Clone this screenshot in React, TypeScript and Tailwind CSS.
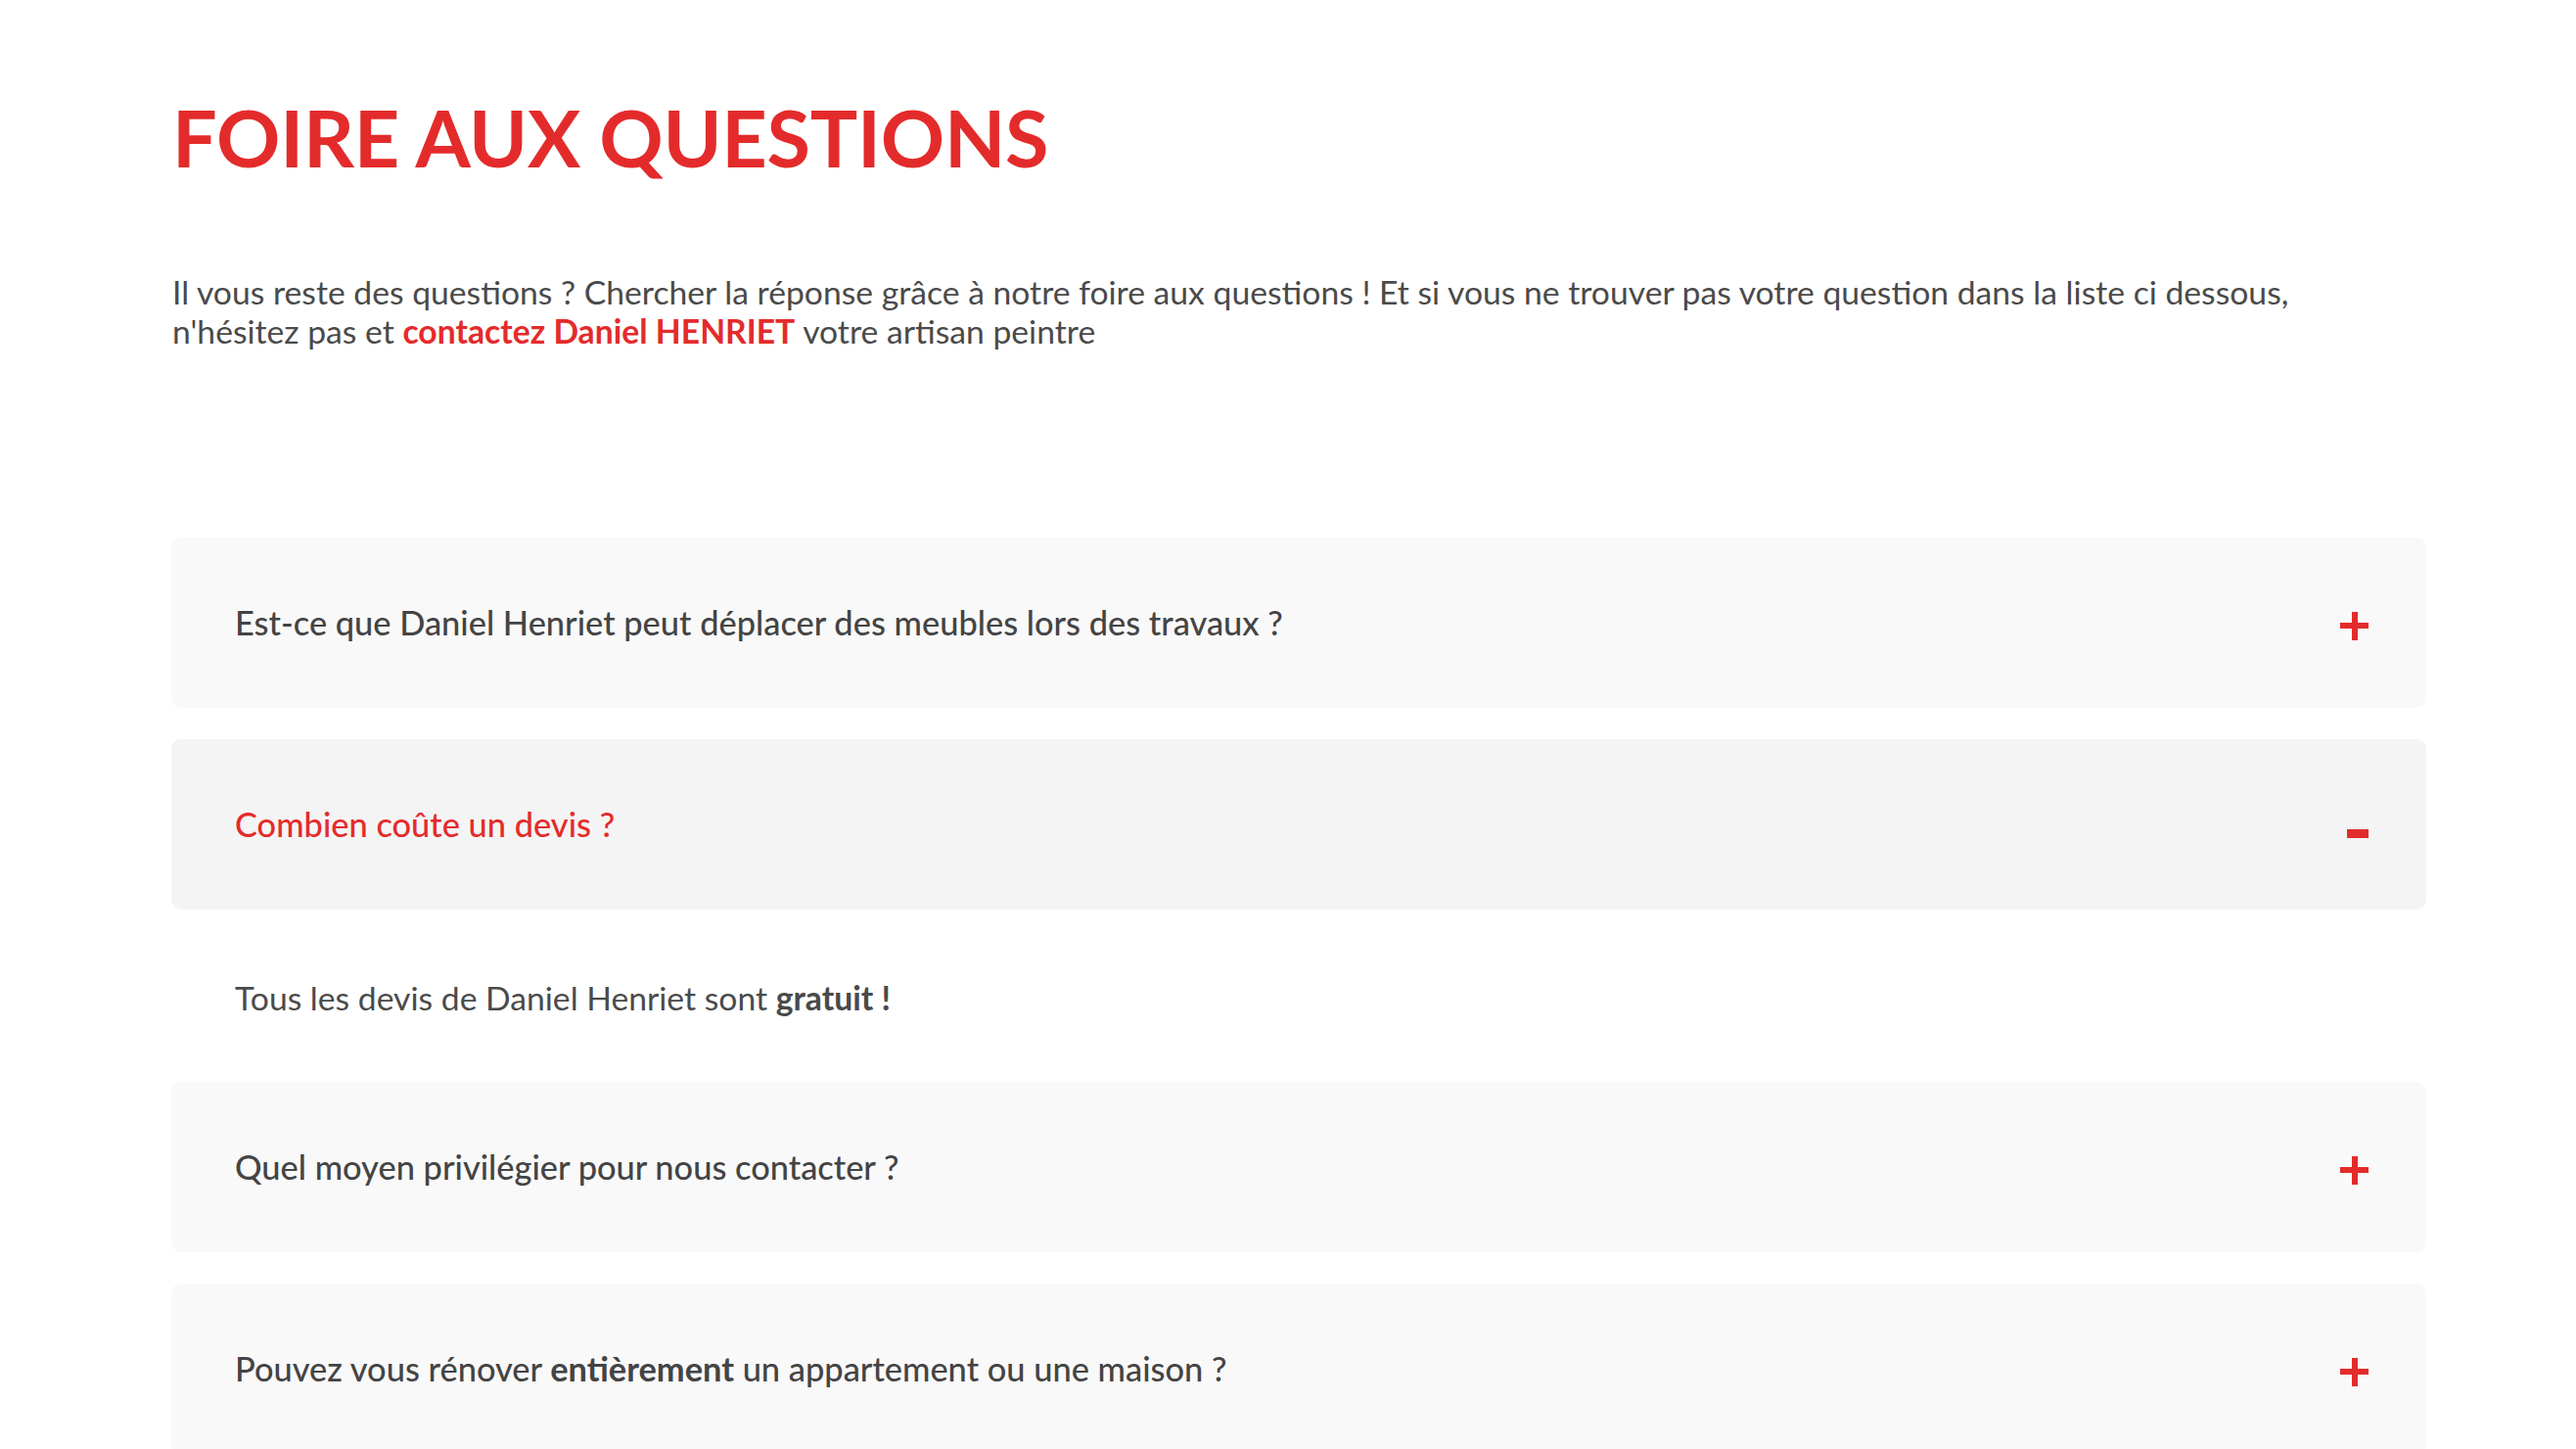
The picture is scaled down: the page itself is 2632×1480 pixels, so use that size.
import React, { useState } from 'react';

type FaqItem = {
    question: React.ReactNode;
    answer: React.ReactNode;
};

const faq: FaqItem[] = [
    {
        question: 'Est-ce que Daniel Henriet peut déplacer des meubles lors des travaux ?',
        answer: 'Oui, nos équipes protègent et déplacent vos meubles avant de commencer.',
    },
    {
        question: 'Combien coûte un devis ?',
        answer: (
            <>
                Tous les devis de Daniel Henriet sont <strong className="font-bold">gratuit !</strong>
            </>
        ),
    },
    {
        question: 'Quel moyen privilégier pour nous contacter ?',
        answer: 'Le téléphone ou le formulaire de contact.',
    },
    {
        question: (
            <>
                Pouvez vous rénover <strong className="font-bold">entièrement</strong> un appartement ou une maison ?
            </>
        ),
        answer: 'Oui, de la préparation des murs aux finitions.',
    },
];

const PlusIcon = () => (
    <div className="relative w-[29px] h-[29px] mt-[6px]">
        <div className="absolute left-0 top-[11.5px] w-[29px] h-[6px] bg-[#e42b2b]" />
        <div className="absolute top-0 left-[11.5px] w-[6px] h-[29px] bg-[#e42b2b]" />
    </div>
);

const MinusIcon = () => (
    <div className="w-[29px] h-[29px] mt-[6px] flex justify-end">
        <div className="w-[22px] h-[9px] mt-[16px] bg-[#e42b2b]" />
    </div>
);

export default function App() {
    const [open, setOpen] = useState<number | null>(1);

    return (
        <div
            className="min-h-screen bg-white text-[#444444]"
            style={{ fontFamily: 'Lato, "Open Sans", sans-serif' }}
        >
            <div className="ml-[175px] w-[2304px] pt-[99px]">
                <h1 className="text-[81px] leading-none font-bold text-[#e42b2b] uppercase pl-[1px] tracking-[-0.3px]">
                    Foire aux questions
                </h1>

                <p className="mt-[98px] text-[33.7px] leading-[40px] text-[#4a4a4a] pl-[1px]">
                    Il vous reste des questions ? Chercher la réponse grâce à notre foire aux questions ! Et si vous ne trouver pas votre question dans la liste ci dessous,
                    <br />
                    n'hésitez pas et{' '}
                    <a href="#" className="font-bold text-[#e42b2b]">
                        contactez Daniel HENRIET
                    </a>{' '}
                    votre artisan peintre
                </p>

                <div className="mt-[191px] flex flex-col gap-8">
                    {faq.map((item, idx) => {
                        const isOpen = open === idx;
                        return (
                            <div key={idx}>
                                <button
                                    onClick={() => setOpen(isOpen ? null : idx)}
                                    className={`w-full h-[174px] rounded-[10px] flex items-center justify-between pl-[65px] pr-[59px] text-left ${isOpen ? 'bg-[#f4f4f4]' : 'bg-[#f9f9f9]'}`}
                                >
                                    <span
                                        className={`text-[34.4px] leading-[40px] font-medium ${isOpen ? 'text-[#e42b2b]' : 'text-[#444444]'}`}
                                    >
                                        {item.question}
                                    </span>
                                    {isOpen ? <MinusIcon /> : <PlusIcon />}
                                </button>
                                {isOpen && (
                                    <div className="pl-[65px] pt-[70px] pb-[34px] text-[33.7px] leading-[40px] text-[#4a4a4a]">
                                        {item.answer}
                                    </div>
                                )}
                            </div>
                        );
                    })}
                </div>
            </div>
        </div>
    );
}
